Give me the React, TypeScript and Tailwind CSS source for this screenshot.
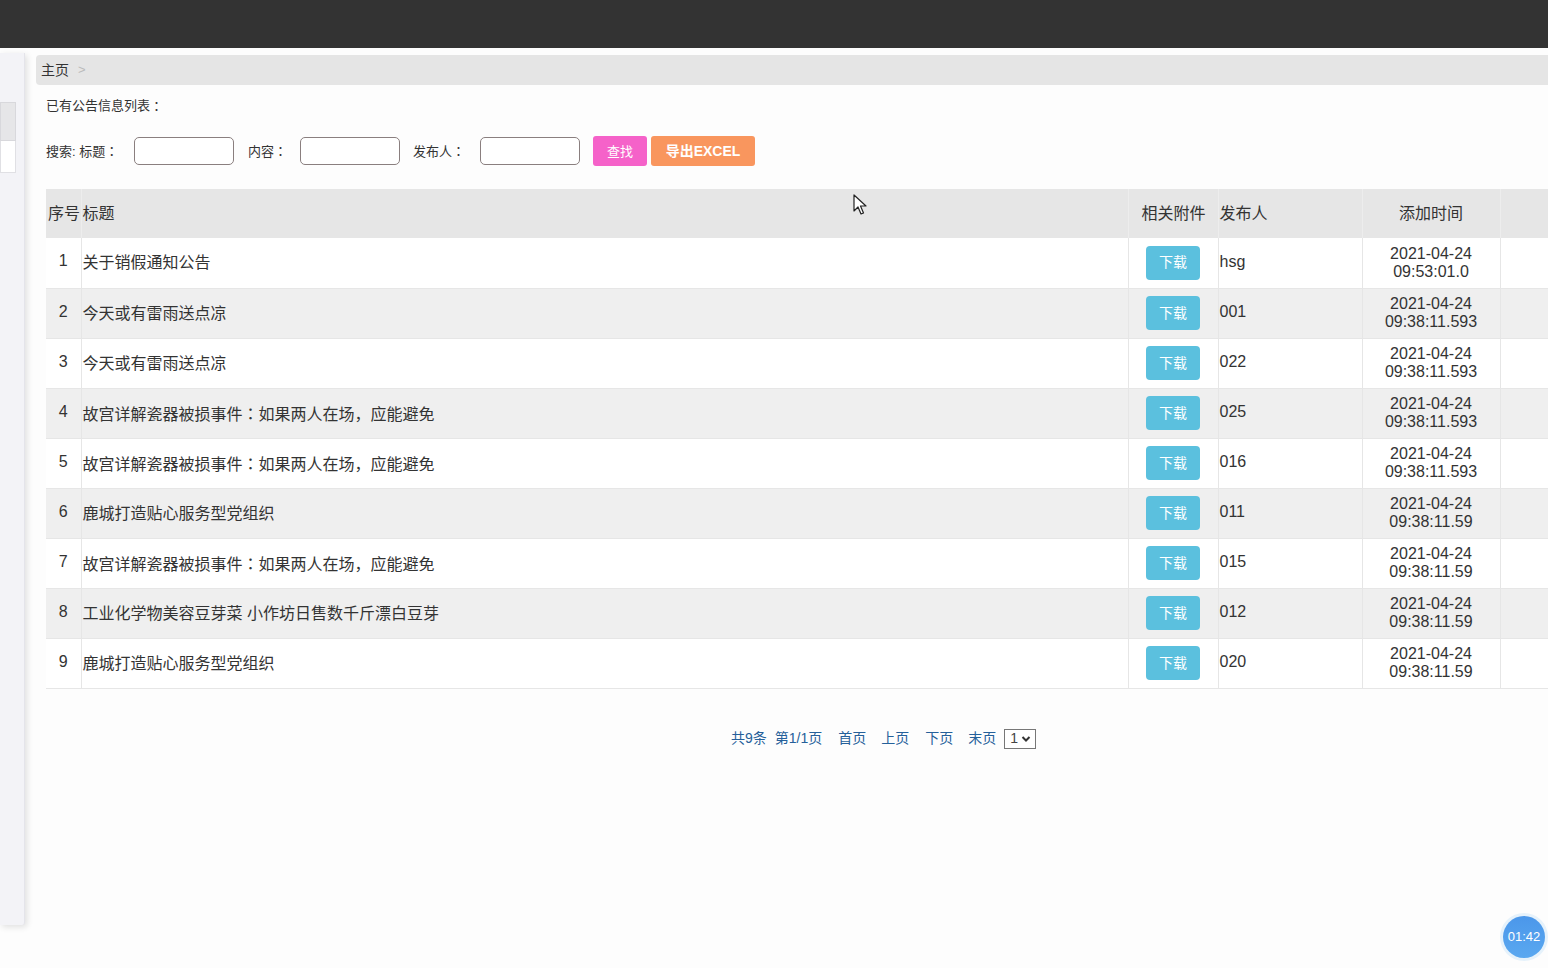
import React from 'react';

const rows = [
  { id: 1, title: ['关于销假通知公告'], author: 'hsg', date: '2021-04-24', time: '09:53:01.0' },
  { id: 2, title: ['今天或有雷雨送点凉'], author: '001', date: '2021-04-24', time: '09:38:11.593' },
  { id: 3, title: ['今天或有雷雨送点凉'], author: '022', date: '2021-04-24', time: '09:38:11.593' },
  { id: 4, title: ['故宫详解瓷器被损事件', '如果两人在场，应能避免'], author: '025', date: '2021-04-24', time: '09:38:11.593' },
  { id: 5, title: ['故宫详解瓷器被损事件', '如果两人在场，应能避免'], author: '016', date: '2021-04-24', time: '09:38:11.593' },
  { id: 6, title: ['鹿城打造贴心服务型党组织'], author: '011', date: '2021-04-24', time: '09:38:11.59' },
  { id: 7, title: ['故宫详解瓷器被损事件', '如果两人在场，应能避免'], author: '015', date: '2021-04-24', time: '09:38:11.59' },
  { id: 8, title: ['工业化学物美容豆芽菜 小作坊日售数千斤漂白豆芽'], author: '012', date: '2021-04-24', time: '09:38:11.59' },
  { id: 9, title: ['鹿城打造贴心服务型党组织'], author: '020', date: '2021-04-24', time: '09:38:11.59' },
];

const font = { fontFamily: '"Liberation Sans", "Noto Sans CJK SC", sans-serif' };
const colonFont = { fontFamily: '"Noto Sans CJK JP", sans-serif' };

// centered full-width colon, as the reference font draws it
function Colon() {
  return <span style={colonFont}>：</span>;
}

function SearchInput() {
  return <input className="w-[100px] h-[28px] rounded-[5px] border border-[#8a7f7f] bg-white outline-none shrink-0" />;
}

export default function App() {
  return (
    <div style={font} className="relative w-full h-[968px] overflow-hidden bg-[#fdfdfd] text-[#333]">
      <div className="h-[48px] bg-[#333333]" />

      <div className="flex mt-[5px]">
        {/* sidebar */}
        <div className="w-[25px] h-[872px] bg-[#f3f3f7] border-r border-[#e4e4ea] shadow-[2px_2px_6px_rgba(0,0,0,0.12)] rounded-br-[3px] shrink-0">
          <div className="h-[49px]" />
          <div className="w-[16px] h-[39px] bg-[#e6e6e8] border border-[#d8d8dc]" />
          <div className="w-[16px] h-[32px] bg-white border border-[#e0e0e4] border-t-0" />
        </div>

        {/* main */}
        <div className="ml-[11px] flex-1 min-w-0">
          <div className="mt-[2px] h-[30px] bg-[#e5e5e5] rounded-l-[4px] flex items-center pl-[5px] text-[14px]">
            <span>主页</span>
            <span className="ml-[9px] text-[#bbb] text-[13px]">&gt;</span>
          </div>

          <div className="pl-[10px]">
            <div className="mt-[12px] h-[18px] flex items-center text-[13px]">已有公告信息列表<Colon /></div>

            <div className="mt-[21px] flex items-center text-[13px] h-[30px]">
              <span className="w-[88px] shrink-0">搜索: 标题<Colon /></span>
              <SearchInput />
              <span className="ml-[14px] w-[52px] shrink-0">内容<Colon /></span>
              <SearchInput />
              <span className="ml-[13px] w-[67px] shrink-0">发布人<Colon /></span>
              <SearchInput />
              <button className="ml-[13px] w-[54px] h-[30px] rounded-[3px] bg-[#f562c9] text-white text-[13px] pt-[2px]">查找</button>
              <button className="ml-[4px] w-[104px] h-[30px] rounded-[3px] bg-[#f9965e] text-white text-[14px] font-bold">导出EXCEL</button>
            </div>

            <div className="mt-[23px] w-[1534px]">
              <table className="table-fixed border-collapse w-[1534px] text-[16px]">
                <colgroup>
                  <col className="w-[35px]" />
                  <col className="w-[1047px]" />
                  <col className="w-[90px]" />
                  <col className="w-[144px]" />
                  <col className="w-[138px]" />
                  <col className="w-[80px]" />
                </colgroup>
                <thead>
                  <tr className="h-[49px] bg-[#e6e6e6]">
                    <th className="font-normal text-left pl-[2px] border-r border-[#ededed]">序号</th>
                    <th className="font-normal text-left pl-[1px] border-r border-[#ededed]">标题</th>
                    <th className="font-normal text-center pl-[1px] border-r border-[#ededed]">相关附件</th>
                    <th className="font-normal text-left pl-[1px] border-r border-[#ededed]">发布人</th>
                    <th className="font-normal text-center border-r border-[#ededed]">添加时间</th>
                    <th />
                  </tr>
                </thead>
                <tbody>
                  {rows.map((r, i) => (
                    <tr key={r.id} className={`h-[50px] border-b border-[#e6e6e6] ${i % 2 === 0 ? 'bg-white' : 'bg-[#efefef]'}`}>
                      <td className="text-center pb-[3px] border-r border-[#e6e6e6]">{r.id}</td>
                      <td className="pl-[1px] pt-[1px] border-r border-[#e6e6e6] whitespace-nowrap">
                        {r.title.length > 1 ? (
                          <>
                            {r.title[0]}
                            <Colon />
                            {r.title[1]}
                          </>
                        ) : (
                          r.title[0]
                        )}
                      </td>
                      <td className="text-center border-r border-[#e6e6e6]">
                        <button className="w-[54px] h-[34px] rounded-[4px] bg-[#5bc0de] text-white text-[14px] align-middle">下载</button>
                      </td>
                      <td className="pl-[1px] pb-[2px] border-r border-[#e6e6e6]">{r.author}</td>
                      <td className="text-center leading-[18px] border-r border-[#e6e6e6]">
                        <div>{r.date}</div>
                        <div>{r.time}</div>
                      </td>
                      <td />
                    </tr>
                  ))}
                </tbody>
              </table>
            </div>

            <div className="mt-[40px] flex items-center text-[14px] text-[#25609a] pl-[685px] h-[20px]">
              <span>共9条</span>
              <span className="ml-[8px]">第1/1页</span>
              <span className="ml-[16px]">首页</span>
              <span className="ml-[15px]">上页</span>
              <span className="ml-[16px]">下页</span>
              <span className="ml-[15px]">末页</span>
              <span className="ml-[8px] w-[32px] h-[20px] border border-[#777] flex items-center pl-[5px] gap-[3px] text-[#444] text-[14px] bg-white">
                1
                <svg width="10" height="8" viewBox="0 0 10 8">
                  <path d="M1.5 2 L5 5.5 L8.5 2" fill="none" stroke="#333" strokeWidth="2" />
                </svg>
              </span>
            </div>
          </div>
        </div>
      </div>

      {/* cursor */}
      <svg className="absolute left-[853px] top-[194px]" width="14" height="22" viewBox="0 0 14 22">
        <path d="M1 1 L1 17 L5 13 L8 20 L10.5 19 L7.5 12 L13 12 Z" fill="white" stroke="#222" strokeWidth="1.2" strokeLinejoin="round" />
      </svg>

      {/* timer */}
      <div className="absolute left-[1500px] top-[913px] w-[48px] h-[48px] rounded-full bg-[#e6f2fb] flex items-center justify-center">
        <div className="w-[42px] h-[42px] rounded-full bg-gradient-to-b from-[#4b97ea] to-[#5aa8f0] flex items-center justify-center text-white text-[13px]">
          01:42
        </div>
      </div>
    </div>
  );
}
